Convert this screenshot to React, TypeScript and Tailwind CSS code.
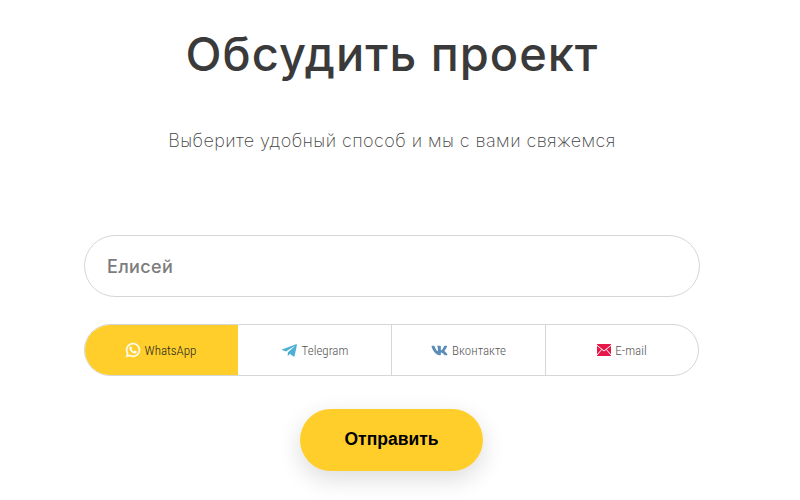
import React from "react";
import { FaWhatsapp, FaTelegramPlane, FaVk } from "react-icons/fa";

function MailIcon() {
  return (
    <svg width="14" height="12" viewBox="0 0 14 12">
      <rect width="14" height="12" rx="0.5" fill="#e8174a" />
      <path d="M0 1.4 L7 7 L14 1.4 M0 11 L4.8 5.3 M14 11 L9.2 5.3" fill="none" stroke="#fff" strokeWidth="1" />
    </svg>
  );
}

const channels = [
  { name: "WhatsApp", width: "w-[153px] pr-[2px]", icon: <FaWhatsapp className="text-white text-[16px]" stroke="currentColor" strokeWidth={14} />, active: true },
  { name: "Telegram", width: "w-[153px]", icon: <FaTelegramPlane className="text-[#4fb0d6] text-[17px]" /> },
  { name: "Вконтакте", width: "w-[154px]", icon: <FaVk className="text-[#5b8db8] text-[17px]" /> },
  { name: "E-mail", width: "flex-1", icon: <MailIcon /> },
];

export default function App() {
  return (
    <div className="w-[800px] h-[500px] overflow-hidden bg-white font-['Inter',sans-serif]">
      <div className="w-[616px] ml-[84px] flex flex-col">
        <h1 className="mt-[24px] h-[60px] leading-[60px] text-center text-[47px] tracking-[1px] font-medium text-[#3a3a3a]">
          Обсудить проект
        </h1>
        <p className="mt-[46px] h-[22px] leading-[22px] text-center text-[18px] tracking-[0.43px] font-extralight text-[#444]">
          Выберите удобный способ и мы с вами свяжемся
        </p>
        <div className="mt-[83px] h-[62px] rounded-[31px] border border-[#d6d6d6] flex items-center px-[22px] pt-[1px] text-[18px] tracking-[0.35px] font-[450] text-[#7c7c7c]">
          Елисей
        </div>
        <div className="mt-[27px] w-[615px] h-[52px] rounded-[26px] border border-[#d6d6d6] flex overflow-hidden font-['Roboto',sans-serif] text-[13px] font-light [font-stretch:75%]">
          {channels.map((c, i) => (
            <div
              key={c.name}
              className={`flex items-center justify-center gap-[4px] ${c.width} ${i > 1 ? "border-l border-[#d6d6d6]" : ""} ${c.active ? "bg-[#ffce2b] text-[#222]" : "text-[#555]"}`}
            >
              {c.icon}
              <span className="pt-[1px]">{c.name}</span>
            </div>
          ))}
        </div>
        <div className="mt-[33px] flex">
          <button className="ml-[216px] w-[183px] h-[62px] rounded-[31px] bg-[#ffce2b] text-black text-[17.5px] font-bold font-['Liberation_Sans',sans-serif] pb-[2px] shadow-[0_8px_24px_rgba(0,0,0,0.14)]">
            Отправить
          </button>
        </div>
      </div>
    </div>
  );
}
